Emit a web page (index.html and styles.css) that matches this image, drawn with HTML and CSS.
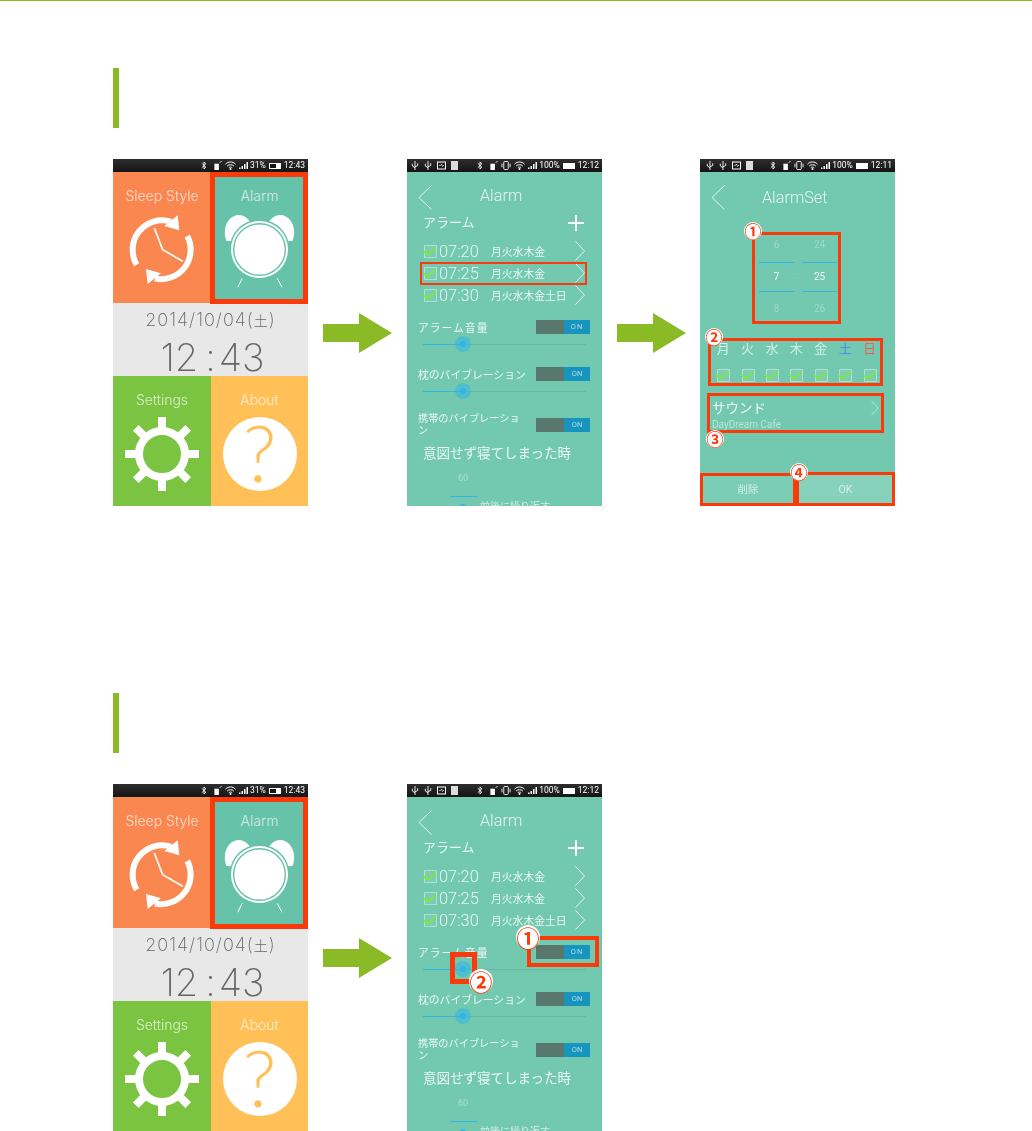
FILE: index.html
```html
<!DOCTYPE html>
<html lang="ja">
<head>
<meta charset="utf-8">
<title>Alarm</title>
<link rel="stylesheet" href="styles.css">
</head>
<body>
<svg class="sprite">
	<symbol id="i-back" viewBox="0 0 14 25"><path d="M13.5 .5 1 12.5 13.5 24.5" fill="none" stroke="currentColor" stroke-width="1"/></symbol>
	<symbol id="i-next" viewBox="0 0 10 20"><path d="M.5 .5 9.5 10 .5 19.5" fill="none" stroke="currentColor" stroke-width="1"/></symbol>
	<symbol id="i-check" viewBox="0 0 14 13"><rect x="1.5" y=".5" width="12" height="12" fill="#ffffff14" stroke="#ffffff66"/><path d="M.3 6.200 4.700 9.500 12.700 2.800" fill="none" stroke="#7df01c" stroke-width="1.500"/></symbol>
	<symbol id="i-bt" viewBox="0 0 6 10"><path d="M.5 2.500 5 6.800 3 9V1L5 3.200 .5 7.500" fill="none" stroke="#fff"/></symbol>
	<symbol id="i-phone" viewBox="0 0 8 10"><path d="M0 3H5V10H0Z" fill="#fff"/><path d="M6 2 8 0" stroke="#fff"/></symbol>
	<symbol id="i-vib" viewBox="0 0 10 10"><rect x="2.500" y=".5" width="5" height="9" rx="1" fill="none" stroke="#fff"/><path d="M.5 3V7M9.500 3V7" stroke="#fff"/></symbol>
	<symbol id="i-wifi" viewBox="0 0 11 9"><path d="M.5 3.200C3.500 .2 7.500 .2 10.500 3.200M2.200 5C4 3.300 7 3.300 8.800 5M3.800 6.700C4.800 5.900 6.200 5.900 7.200 6.700" fill="none" stroke="#fff"/><circle cx="5.500" cy="8" r="1" fill="#fff"/></symbol>
	<symbol id="i-bars" viewBox="0 0 9 7"><path d="M0 5.500H1.500V7H0ZM2.500 4H4V7H2.500ZM5 2H6.500V7H5ZM7.500 0H9V7H7.500Z" fill="#fff"/></symbol>
	<symbol id="i-usb" viewBox="0 0 8 10"><path d="M4 0V10M1 3V5.500L4 7.500M7 2.500V5L4 6.500" fill="none" stroke="#fff"/></symbol>
	<symbol id="i-mail" viewBox="0 0 9 8"><rect x=".5" y=".5" width="8" height="7" fill="none" stroke="#fff"/><path d="M2 4H3.500L4.500 2.500 5.500 5 6 4H7" fill="none" stroke="#fff" stroke-width=".6"/></symbol>
	<symbol id="i-sync" viewBox="0 0 76 76">
		<g fill="none" stroke="#fff">
			<path d="M12.700 52.700A29.500 29.500 0 0 1 47 9.600M63.300 24A29.500 29.500 0 0 1 31 66.500" stroke-width="6"/>
			<path d="M30.300 16 38.700 37.700 58.700 49.300" stroke-width="1.700"/>
		</g>
		<path d="M53.700 3.300 40.300 14 55.300 18.300ZM22 57 23.700 72 37 61.300Z" fill="#fff"/>
	</symbol>
	<symbol id="i-clock" viewBox="0 0 76 76">
		<path d="M4.500 29C-.5 17 6 3 17 3 21.500 3 26 6 28.500 10.700L30 30ZM70.500 29C75.500 17 69 3 58 3 53.500 3 49 6 46.500 10.700L45 30Z" fill="#fff"/>
		<circle cx="37.500" cy="37.500" r="30" fill="#66c2a8"/>
		<circle cx="37.500" cy="37.500" r="28.500" fill="#fff"/>
		<circle cx="37.500" cy="37.500" r="25.800" fill="none" stroke="#66c2a8" stroke-width="1.400"/>
		<path d="M20.200 66.300 15.800 75.300M55.200 66.300 60 75.300" stroke="#fff"/>
	</symbol>
	<symbol id="i-gear" viewBox="0 0 76 76">
		<path d="M38 1V75M1 38H75M11.800 11.800 64.200 64.200M64.200 11.800 11.800 64.200" stroke="#fff" stroke-width="8"/>
		<circle cx="38" cy="38" r="23" fill="#7bc442" stroke="#fff" stroke-width="8"/>
	</symbol>
	<symbol id="i-arrow" viewBox="0 0 69 40"><path d="M0 11H36V0L69 20 36 40V29H0Z" fill="#8aba25"/></symbol>
</svg>

<main class="page">
	<section class="guide">
		<div class="guide-bar"></div>
		<div class="flow">
			<div class="phone">
				<div class="status">
					<span class="status-right">
						<svg class="s-bt"><use href="#i-bt"/></svg><svg class="s-ph"><use href="#i-phone"/></svg><svg class="s-wifi"><use href="#i-wifi"/></svg><svg class="s-bars"><use href="#i-bars"/></svg>
						<span>31%</span><span class="battery battery-low"></span><span>12:43</span>
					</span>
				</div>
				<div class="home">
					<div class="tile tile-sleep">Sleep Style<svg class="tile-icon"><use href="#i-sync"/></svg></div>
					<div class="tile tile-alarm">Alarm<svg class="tile-icon"><use href="#i-clock"/></svg></div>
					<div class="clock">
						<div class="clock-date">2014/10/04(<span class="clock-week">土</span>)</div>
						<div class="clock-time">12<span class="clock-colon">:</span>43</div>
					</div>
					<div class="tile tile-settings">Settings<svg class="tile-icon"><use href="#i-gear"/></svg></div>
					<div class="tile tile-about">About<div class="about-disc">?</div></div>
				</div>
				<div class="mark mark-home"></div>
			</div>

			<svg class="arrow"><use href="#i-arrow"/></svg>

			<div class="phone">
				<div class="status">
					<span class="status-left"><svg class="s-usb"><use href="#i-usb"/></svg><svg class="s-usb"><use href="#i-usb"/></svg><svg class="s-mail"><use href="#i-mail"/></svg><span class="s-block"></span></span>
					<span class="status-right">
						<svg class="s-bt"><use href="#i-bt"/></svg><svg class="s-ph"><use href="#i-phone"/></svg><svg class="s-vib"><use href="#i-vib"/></svg><svg class="s-wifi"><use href="#i-wifi"/></svg><svg class="s-bars"><use href="#i-bars"/></svg>
						<span>100%</span><span class="battery"></span><span>12:12</span>
					</span>
				</div>
				<div class="screen">
					<div class="nav"><svg class="back"><use href="#i-back"/></svg><div class="nav-title nav-title-alarm">Alarm</div></div>
					<div class="list-head">アラーム<span class="plus"></span></div>
					<div class="alarm-row"><svg class="check"><use href="#i-check"/></svg><span class="alarm-time">07:20</span><span class="alarm-days">月火水木金</span><svg class="next"><use href="#i-next"/></svg></div>
					<div class="alarm-row"><svg class="check"><use href="#i-check"/></svg><span class="alarm-time">07:25</span><span class="alarm-days">月火水木金</span><svg class="next"><use href="#i-next"/></svg></div>
					<div class="alarm-row"><svg class="check"><use href="#i-check"/></svg><span class="alarm-time">07:30</span><span class="alarm-days">月火水木金土日</span><svg class="next"><use href="#i-next"/></svg></div>
					<div class="setting setting-first">
						<div class="setting-row"><span>アラーム音量</span><span class="toggle"><span class="toggle-on">ON</span></span></div>
						<div class="slider"><span class="slider-fill"></span><span class="slider-thumb"></span></div>
					</div>
					<div class="setting">
						<div class="setting-row"><span>枕のバイブレーション</span><span class="toggle"><span class="toggle-on">ON</span></span></div>
						<div class="slider"><span class="slider-fill"></span><span class="slider-thumb"></span></div>
					</div>
					<div class="setting-row setting-wrap"><span class="setting-long">携帯のバイブレーション</span><span class="toggle"><span class="toggle-on">ON</span></span></div>
					<div class="sleep-head">意図せず寝てしまった時</div>
					<div class="sleep-num">60</div>
					<div class="sleep-line"></div>
					<div class="sleep-cut"><span class="sleep-dot"></span>前後に繰り返す</div>
				</div>
				<div class="mark mark-row"></div>
			</div>

			<svg class="arrow"><use href="#i-arrow"/></svg>

			<div class="phone phone-set">
				<div class="status">
					<span class="status-left status-left-set"><svg class="s-usb"><use href="#i-usb"/></svg><svg class="s-usb"><use href="#i-usb"/></svg><svg class="s-mail"><use href="#i-mail"/></svg><span class="s-block"></span></span>
					<span class="status-right">
						<svg class="s-bt"><use href="#i-bt"/></svg><svg class="s-ph"><use href="#i-phone"/></svg><svg class="s-vib"><use href="#i-vib"/></svg><svg class="s-wifi"><use href="#i-wifi"/></svg><svg class="s-bars"><use href="#i-bars"/></svg>
						<span>100%</span><span class="battery"></span><span>12:11</span>
					</span>
				</div>
				<div class="screen">
					<div class="nav"><svg class="back"><use href="#i-back"/></svg><div class="nav-title nav-title-set">AlarmSet</div></div>
					<div class="picker">
						<div class="picker-col"><div class="picker-cell">6</div><div class="picker-cell picker-now">7</div><div class="picker-cell">8</div></div>
						<div class="picker-sep">:</div>
						<div class="picker-col"><div class="picker-cell">24</div><div class="picker-cell picker-now">25</div><div class="picker-cell">26</div></div>
					</div>
					<div class="days">
						<span>月</span><span>火</span><span>水</span><span>木</span><span>金</span><span class="day-sat">土</span><span class="day-sun">日</span>
						<svg class="check"><use href="#i-check"/></svg><svg class="check"><use href="#i-check"/></svg><svg class="check"><use href="#i-check"/></svg><svg class="check"><use href="#i-check"/></svg><svg class="check"><use href="#i-check"/></svg><svg class="check"><use href="#i-check"/></svg><svg class="check"><use href="#i-check"/></svg>
					</div>
					<div class="sound">
						<div><div class="sound-title">サウンド</div><div class="sound-name">DayDream Cafe</div></div>
						<svg class="next next-sound"><use href="#i-next"/></svg>
					</div>
					<div class="buttons"><div class="btn btn-delete">削除</div><div class="btn btn-ok">OK</div></div>
				</div>
				<div class="mark mark-wide mark-picker"></div>
				<div class="mark mark-wide mark-days"></div>
				<div class="mark mark-wide mark-sound"></div>
				<div class="mark mark-wide mark-delete"></div>
				<div class="mark mark-wide mark-ok"></div>
				<span class="num num-1">①</span>
				<span class="num num-2">②</span>
				<span class="num num-3">③</span>
				<span class="num num-4">④</span>
			</div>
		</div>
	</section>

	<section class="guide guide-second">
		<div class="guide-bar"></div>
		<div class="flow">
			<div class="phone">
				<div class="status">
					<span class="status-right">
						<svg class="s-bt"><use href="#i-bt"/></svg><svg class="s-ph"><use href="#i-phone"/></svg><svg class="s-wifi"><use href="#i-wifi"/></svg><svg class="s-bars"><use href="#i-bars"/></svg>
						<span>31%</span><span class="battery battery-low"></span><span>12:43</span>
					</span>
				</div>
				<div class="home">
					<div class="tile tile-sleep">Sleep Style<svg class="tile-icon"><use href="#i-sync"/></svg></div>
					<div class="tile tile-alarm">Alarm<svg class="tile-icon"><use href="#i-clock"/></svg></div>
					<div class="clock">
						<div class="clock-date">2014/10/04(<span class="clock-week">土</span>)</div>
						<div class="clock-time">12<span class="clock-colon">:</span>43</div>
					</div>
					<div class="tile tile-settings">Settings<svg class="tile-icon"><use href="#i-gear"/></svg></div>
					<div class="tile tile-about">About<div class="about-disc">?</div></div>
				</div>
				<div class="mark mark-home"></div>
			</div>

			<svg class="arrow"><use href="#i-arrow"/></svg>

			<div class="phone">
				<div class="status">
					<span class="status-left"><svg class="s-usb"><use href="#i-usb"/></svg><svg class="s-usb"><use href="#i-usb"/></svg><svg class="s-mail"><use href="#i-mail"/></svg><span class="s-block"></span></span>
					<span class="status-right">
						<svg class="s-bt"><use href="#i-bt"/></svg><svg class="s-ph"><use href="#i-phone"/></svg><svg class="s-vib"><use href="#i-vib"/></svg><svg class="s-wifi"><use href="#i-wifi"/></svg><svg class="s-bars"><use href="#i-bars"/></svg>
						<span>100%</span><span class="battery"></span><span>12:12</span>
					</span>
				</div>
				<div class="screen">
					<div class="nav"><svg class="back"><use href="#i-back"/></svg><div class="nav-title nav-title-alarm">Alarm</div></div>
					<div class="list-head">アラーム<span class="plus"></span></div>
					<div class="alarm-row"><svg class="check"><use href="#i-check"/></svg><span class="alarm-time">07:20</span><span class="alarm-days">月火水木金</span><svg class="next"><use href="#i-next"/></svg></div>
					<div class="alarm-row"><svg class="check"><use href="#i-check"/></svg><span class="alarm-time">07:25</span><span class="alarm-days">月火水木金</span><svg class="next"><use href="#i-next"/></svg></div>
					<div class="alarm-row"><svg class="check"><use href="#i-check"/></svg><span class="alarm-time">07:30</span><span class="alarm-days">月火水木金土日</span><svg class="next"><use href="#i-next"/></svg></div>
					<div class="setting setting-first">
						<div class="setting-row"><span>アラーム音量</span><span class="toggle"><span class="toggle-on">ON</span></span></div>
						<div class="slider"><span class="slider-fill"></span><span class="slider-thumb"></span></div>
					</div>
					<div class="setting">
						<div class="setting-row"><span>枕のバイブレーション</span><span class="toggle"><span class="toggle-on">ON</span></span></div>
						<div class="slider"><span class="slider-fill"></span><span class="slider-thumb"></span></div>
					</div>
					<div class="setting-row setting-wrap"><span class="setting-long">携帯のバイブレーション</span><span class="toggle"><span class="toggle-on">ON</span></span></div>
					<div class="sleep-head">意図せず寝てしまった時</div>
					<div class="sleep-num">60</div>
					<div class="sleep-line"></div>
					<div class="sleep-cut"><span class="sleep-dot"></span>前後に繰り返す</div>
				</div>
				<div class="mark mark-toggle"></div>
				<div class="mark mark-thumb"></div>
				<span class="num num-big num-toggle">①</span>
				<span class="num num-big num-thumb">②</span>
			</div>
		</div>
	</section>
</main>
</body>
</html>
```

FILE: styles.css
```css
body {
	margin: 0;
	background: #fff;
	font-family: "Roboto", "Noto Sans CJK JP", sans-serif;
	overflow: hidden;
}
.sprite {
	display: none;
}
.page {
	border-top: 1px solid #8aba25;
	padding-left: 113px;
}
.guide {
	padding-top: 67px;
}
.guide-second {
	padding-top: 187px;
}
.guide-bar {
	width: 6px;
	height: 60px;
	background: #8aba25;
	margin-bottom: 31px;
}
.flow {
	display: flex;
	align-items: center;
	gap: 15px;
}
.arrow {
	width: 69px;
	height: 40px;
	flex: none;
}

/* phone frame */
.phone {
	position: relative;
	flex: none;
	width: 195px;
	height: 347px;
	overflow: hidden;
	display: flex;
	flex-direction: column;
	filter: blur(.3px);
}
.phone-set {
	margin-left: -1px;
}
.status {
	flex: none;
	height: 13px;
	display: flex;
	align-items: center;
	padding: 0 3px 0 4px;
	background: linear-gradient(#2e2e2e, #141414);
	color: #fff;
	font-size: 8.500px;
	line-height: 13px;
}
.status-left {
	display: flex;
	align-items: center;
	gap: 5px;
}
.status-left-set {
	padding-left: 2px;
}
.status-right {
	margin-left: auto;
	display: flex;
	align-items: center;
	gap: 2px;
}
.status svg {
	display: block;
	height: 9px;
}
.s-bt {
	width: 6px;
	margin-right: 5px;
}
.s-ph {
	width: 8px;
}
.s-vib {
	width: 10px;
	margin-left: 1px;
}
.s-wifi {
	width: 11px;
	margin-left: 1px;
}
.s-bars {
	width: 9px;
	margin-left: 1px;
}
.s-usb {
	width: 8px;
}
.s-mail {
	width: 9px;
}
.s-block {
	width: 7px;
	height: 9px;
	background: #ddd;
}
.battery {
	width: 12px;
	height: 6px;
	box-sizing: border-box;
	border: 1px solid #fff;
	background: #fff;
	margin: 0 1px;
}
.battery-low {
	background: linear-gradient(90deg, #141414 60%, #fff 60%);
}

/* home screen */
.home {
	flex: 1;
	display: grid;
	grid-template-columns: 98px 97px;
	grid-template-rows: 131px 73px 130px;
}
.tile {
	display: flex;
	flex-direction: column;
	align-items: center;
	padding-top: 16px;
	font-family: "Inter", "Roboto", sans-serif;
	font-weight: 300;
	font-size: 14px;
	line-height: 16px;
	color: #ffffffb8;
}
.tile-icon {
	width: 76px;
	height: 76px;
	margin-top: 8px;
}
.tile-sleep {
	background: #fa8750;
}
.tile-alarm {
	background: #66c2a8;
}
.tile-settings {
	background: #7bc442;
}
.tile-about {
	background: #fec057;
}
.about-disc {
	width: 74px;
	height: 74px;
	margin-top: 9px;
	border-radius: 50%;
	background: #fff;
	color: #fec057;
	font-family: "Lato", sans-serif;
	font-weight: 300;
	font-size: 78px;
	line-height: 70px;
	text-align: center;
}
.clock {
	grid-column: 1 / 3;
	background: #e8e8e8;
	color: #666;
	text-align: center;
	font-family: "Inter", "Roboto", "Noto Sans CJK JP", sans-serif;
	font-weight: 200;
}
.clock-date {
	font-size: 18px;
	letter-spacing: 1px;
	line-height: 20px;
	padding-top: 7px;
}
.clock-week {
	font-size: 14px;
}
.clock-time {
	font-size: 38px;
	line-height: 44px;
	margin-top: 4px;
	padding-left: 4px;
}
.clock-colon {
	padding: 0 3px 0 7px;
}

/* alarm screens */
.screen {
	flex: 1;
	display: flex;
	flex-direction: column;
	min-height: 0;
	background: #72c9af;
	color: #ffffffd9;
}
.screen > * {
	flex: none;
}
.nav {
	display: flex;
	padding: 13px 0 0 11px;
	height: 25px;
	color: #ffffffcc;
}
.back {
	width: 14px;
	height: 25px;
}
.nav-title {
	font-size: 16.200px;
	font-weight: 300;
	line-height: 22px;
}
.nav-title-alarm {
	margin-left: 48px;
}
.nav-title-set {
	margin: 2px 0 0 37px;
}
.list-head {
	height: 26px;
	line-height: 26px;
	margin-bottom: 4px;
	padding: 0 18px 0 16px;
	font-size: 13px;
	display: flex;
	justify-content: space-between;
	align-items: center;
}
.plus {
	width: 16px;
	height: 16px;
	background: linear-gradient(#fff, #fff) center / 16px 2px no-repeat, linear-gradient(#fff, #fff) center / 2px 16px no-repeat;
}
.alarm-row {
	height: 22px;
	display: flex;
	align-items: center;
	padding-left: 16px;
}
.check {
	width: 14px;
	height: 13px;
	flex: none;
}
.alarm-time {
	font-size: 16.400px;
	font-weight: 300;
	width: 52px;
	margin-left: 2px;
}
.alarm-days {
	font-size: 10.800px;
}
.next {
	width: 10px;
	height: 20px;
	color: #ffffffcc;
}
.alarm-row .next {
	margin-left: auto;
	margin-right: 17px;
}
.setting {
	margin-bottom: 15px;
}
.setting-first {
	margin-top: 14px;
}
.setting-row {
	height: 14px;
	padding: 0 12px 0 11px;
	display: flex;
	justify-content: space-between;
	align-items: center;
	font-size: 10.800px;
	white-space: nowrap;
}
.setting-first .setting-row span:first-child {
	letter-spacing: 1px;
}
.setting-wrap {
	height: 24px;
	margin-top: -1px;
}
.setting-long {
	width: 106px;
	white-space: normal;
	line-height: 12px;
	font-size: 10.200px;
}
.toggle {
	flex: none;
	width: 54px;
	height: 14px;
	background: #58776d;
	display: flex;
	justify-content: flex-end;
}
.toggle-on {
	width: 26px;
	background: #1795bf;
	color: #ffffffa6;
	text-align: center;
	font-size: 7.500px;
	line-height: 14px;
}
.slider {
	position: relative;
	height: 1px;
	margin: 10px 16px 7px 16px;
	background: #64b9a0;
}
.slider-fill {
	display: block;
	width: 40px;
	height: 1px;
	background: #33b5e5;
}
.slider-thumb {
	position: absolute;
	left: 32px;
	top: -8px;
	width: 16px;
	height: 16px;
	border-radius: 50%;
	background: radial-gradient(#33b5e5 0 3px, #33b5e588 3.500px);
}
.sleep-head {
	margin: 7px 0 0 16px;
	font-size: 13.500px;
	line-height: 18px;
	white-space: nowrap;
}
.sleep-num {
	margin: 10px 0 0 51px;
	font-size: 9px;
	line-height: 12px;
	color: #ffffff66;
}
.sleep-line {
	width: 27px;
	height: 1px;
	margin: 12px 0 0 43px;
	background: #33b5e5;
}
.sleep-cut {
	display: flex;
	align-items: center;
	margin: 4px 0 0 53px;
	font-size: 10px;
	line-height: 12px;
	gap: 14px;
	white-space: nowrap;
	color: #ffffffb3;
}
.sleep-dot {
	width: 6px;
	height: 6px;
	border-radius: 50%;
	background: #33b5e5;
}

/* time picker and form */
.picker {
	display: flex;
	margin: 18px 0 0 59px;
}
.picker-col {
	width: 35px;
	text-align: center;
	font-size: 10px;
	color: #ffffff4d;
}
.picker-cell {
	height: 34px;
	line-height: 34px;
}
.picker-now {
	height: 28px;
	line-height: 28px;
	border-top: 1px solid #33b5e5;
	border-bottom: 1px solid #33b5e5;
	color: #ffffffe6;
}
.picker-sep {
	width: 8px;
	font-size: 9px;
	line-height: 97px;
	text-align: center;
	color: #ffffff4d;
}
.days {
	display: grid;
	grid-template-columns: repeat(7, 24.400px);
	justify-items: center;
	align-items: center;
	row-gap: 10px;
	margin: 13px 0 0 11px;
	font-size: 13px;
	line-height: 20px;
	color: #ffffffb3;
}
.day-sat {
	color: #4a90ee;
}
.day-sun {
	color: #f06060;
}
.sound {
	display: flex;
	justify-content: space-between;
	margin-top: 16px;
	padding: 0 15px 0 12px;
}
.sound-title {
	font-size: 13.500px;
	line-height: 20px;
}
.sound-name {
	margin-top: 1px;
	font-size: 10px;
	line-height: 12px;
	color: #ffffff80;
}
.next-sound {
	width: 10px;
	height: 14px;
	margin-top: 3px;
}
.buttons {
	display: flex;
	height: 33px;
	margin-top: auto;
}
.btn {
	text-align: center;
	font-size: 10.500px;
	line-height: 33px;
	color: #ffffffa6;
}
.btn-delete {
	flex: 96;
	background: #7ccdb5;
}
.btn-ok {
	flex: 99;
	background: #86d2bb;
}

/* red marks drawn over the screenshots */
.mark {
	position: absolute;
	box-sizing: border-box;
	border: 2px solid #fb3a0c;
}
.mark-wide {
	border-width: 3px;
}
.mark-home {
	left: 97px;
	top: 13px;
	width: 98px;
	height: 132px;
	border-width: 5px;
}
.mark-row {
	left: 13px;
	top: 103px;
	width: 167px;
	height: 23px;
}
.mark-picker {
	left: 52px;
	top: 73px;
	width: 89px;
	height: 92px;
}
.mark-days {
	left: 8px;
	top: 179px;
	width: 175px;
	height: 48px;
}
.mark-sound {
	left: 7px;
	top: 234px;
	width: 177px;
	height: 40px;
}
.mark-delete {
	left: 0;
	top: 314px;
	width: 96px;
	height: 33px;
}
.mark-ok {
	left: 96px;
	top: 313px;
	width: 99px;
	height: 34px;
}
.mark-toggle {
	left: 120px;
	top: 152px;
	width: 72px;
	height: 31px;
	border-width: 4px;
}
.mark-thumb {
	left: 43px;
	top: 168px;
	width: 27px;
	height: 32px;
	border-width: 5px;
}
.num {
	position: absolute;
	width: 18px;
	height: 18px;
	border-radius: 50%;
	background: #fff;
	color: #fb3a0c;
	font-family: "Noto Sans CJK JP", sans-serif;
	font-weight: 700;
	font-size: 17px;
	line-height: 18px;
	text-align: center;
}
.num-1 {
	left: 44px;
	top: 63px;
}
.num-2 {
	left: 5px;
	top: 169px;
}
.num-3 {
	left: 6px;
	top: 271px;
}
.num-4 {
	left: 90px;
	top: 304px;
}
.num-big {
	width: 24px;
	height: 24px;
	font-size: 23px;
	line-height: 24px;
}
.num-toggle {
	left: 109px;
	top: 141px;
}
.num-thumb {
	left: 62px;
	top: 185px;
}
```
